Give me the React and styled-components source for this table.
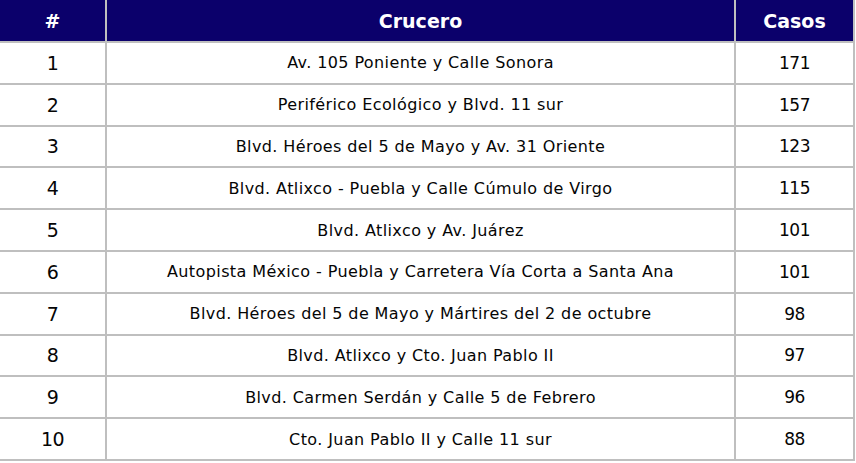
import React from "react";
import styled, { createGlobalStyle } from "styled-components";

const GlobalStyle = createGlobalStyle`
  html, body {
    margin: 0;
    padding: 0;
    background: #ffffff;
  }
  body {
    font-family: "DejaVu Sans", "Liberation Sans", sans-serif;
  }
`;

const crossings = [
  { pos: 1, name: "Av. 105 Poniente y Calle Sonora", cases: 171 },
  { pos: 2, name: "Periférico Ecológico y Blvd. 11 sur", cases: 157 },
  { pos: 3, name: "Blvd. Héroes del 5 de Mayo y Av. 31 Oriente", cases: 123 },
  { pos: 4, name: "Blvd. Atlixco - Puebla y Calle Cúmulo de Virgo", cases: 115 },
  { pos: 5, name: "Blvd. Atlixco y Av. Juárez", cases: 101 },
  { pos: 6, name: "Autopista México - Puebla y Carretera Vía Corta a Santa Ana", cases: 101 },
  { pos: 7, name: "Blvd. Héroes del 5 de Mayo y Mártires del 2 de octubre", cases: 98 },
  { pos: 8, name: "Blvd. Atlixco y Cto. Juan Pablo II", cases: 97 },
  { pos: 9, name: "Blvd. Carmen Serdán y Calle 5 de Febrero", cases: 96 },
  { pos: 10, name: "Cto. Juan Pablo II y Calle 11 sur", cases: 88 },
];

const Table = styled.table`
  width: 855px;
  border-collapse: collapse;
  table-layout: fixed;
`;

const HeadCell = styled.th`
  height: 41px;
  padding: 0;
  background-color: #0b006b;
  color: #ffffff;
  font-size: 19px;
  font-weight: 700;
  text-align: center;
  width: ${(p) => p.w || "auto"};
  border-right: 2px solid #bfbfbf;
  border-bottom: 2px solid #bfbfbf;
`;

const Cell = styled.td`
  height: 39.8px;
  padding: 0;
  color: #050505;
  font-size: ${(p) => p.size || "16px"};
  letter-spacing: ${(p) => (p.size ? "-0.5px" : "0.4px")};
  text-align: center;
  border-right: 2px solid #bfbfbf;
  border-bottom: 2px solid #bfbfbf;
`;

const App = () => {
  return (
    <>
      <GlobalStyle />
      <Table>
        <thead>
          <tr>
            <HeadCell w="105px">#</HeadCell>
            <HeadCell w="627px">Crucero</HeadCell>
            <HeadCell>Casos</HeadCell>
          </tr>
        </thead>
        <tbody>
          {crossings.map((row) => (
            <tr key={row.pos}>
              <Cell size="19px">{row.pos}</Cell>
              <Cell>{row.name}</Cell>
              <Cell size="17px">{row.cases}</Cell>
            </tr>
          ))}
        </tbody>
      </Table>
    </>
  );
};

export default App;
